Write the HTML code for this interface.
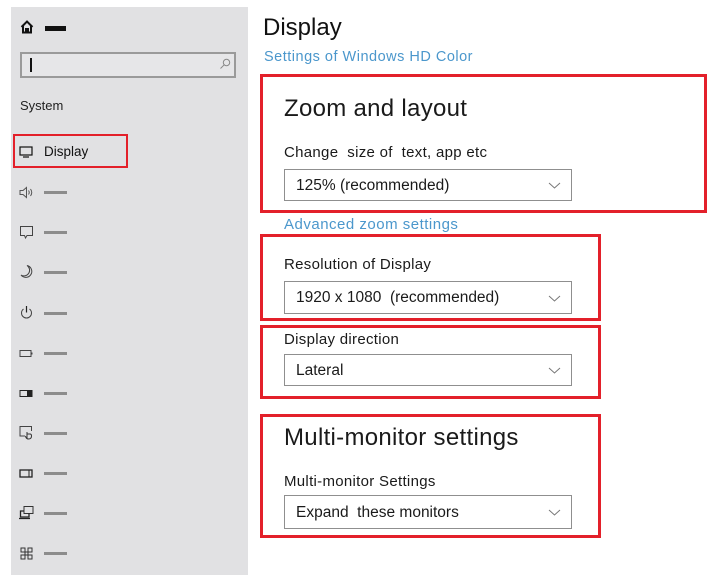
<!DOCTYPE html>
<html><head><meta charset="utf-8"><style>
*{margin:0;padding:0;box-sizing:border-box}
body{width:709px;height:579px;background:#fff;position:relative;overflow:hidden;font-family:"Liberation Sans","DejaVu Sans",sans-serif;color:#1a1a1a}
.a{position:absolute;white-space:nowrap}
#side{position:absolute;left:11px;top:7px;width:237px;height:568px;background:#e1e1e3}
.dash{position:absolute;left:44px;width:23px;height:3px;background:#8c8c8c}
.ic{position:absolute;left:19px;width:15px;height:15px}
.red{position:absolute;border:3px solid #e3202a}
.dd{position:absolute;left:284px;width:288px;border:1px solid #8f8f8f;background:#fff;font-size:15.5px;padding-left:11px}
.dd svg{position:absolute;right:10px;top:50%;margin-top:-3px}
.lbl{font-size:15px;left:284px;letter-spacing:0.3px}
.h{font-size:24px;left:284px;letter-spacing:0.3px}
.link{color:#4b97cc;letter-spacing:0.5px}
</style></head><body>
<div id="side"></div>
<svg class="a" style="left:20px;top:20px" width="14" height="14" viewBox="0 0 14 14"><path d="M1.5 7 L7 1.5 L12.5 7 M3 6 V12.5 H6 V9 H8 V12.5 H11 V6" fill="none" stroke="#111" stroke-width="2"/></svg>
<div class="a" style="left:45px;top:26px;width:21px;height:5px;background:#111"></div>
<div class="a" style="left:20px;top:52px;width:216px;height:26px;border:2px solid #9a9a9a;background:#e6e6e8"></div>
<div class="a" style="left:30px;top:58px;width:2px;height:14px;background:#111"></div>
<svg class="a" style="left:219px;top:58px" width="12" height="12" viewBox="0 0 12 12"><circle cx="7.5" cy="4.5" r="3.2" fill="none" stroke="#888" stroke-width="1"/><path d="M5.2 6.8 L1.5 10.5" stroke="#888" stroke-width="1"/></svg>
<div class="a" style="left:20px;top:98px;font-size:13px;color:#222">System</div>
<div class="red" style="left:13px;top:134px;width:115px;height:34px;border-width:2px"></div>
<svg class="a" style="left:19px;top:146px" width="14" height="12" viewBox="0 0 14 12"><rect x="1" y="1" width="12" height="8" fill="none" stroke="#111" stroke-width="1.2"/><path d="M4 11 H10" stroke="#111" stroke-width="1.2"/></svg>
<div class="a" style="left:44px;top:144px;font-size:13.5px;color:#111">Display</div>
<svg class="ic" style="top:185px" viewBox="0 0 15 15"><path d="M1 5.5 H4 L7.5 2.5 V12.5 L4 9.5 H1 Z M9.5 5.5 Q11 7.5 9.5 9.5 M11.5 4 Q14 7.5 11.5 11" fill="none" stroke="#555" stroke-width="1"/></svg>
<div class="dash" style="top:191px"></div>
<svg class="ic" style="top:225px" viewBox="0 0 15 15"><path d="M1.5 1.5 H13.5 V10.5 H8 L6.5 13 L5.5 10.5 H1.5 Z" fill="none" stroke="#444" stroke-width="1"/></svg>
<div class="dash" style="top:231px"></div>
<svg class="ic" style="top:264px" viewBox="0 0 15 15"><path d="M8 1.5 A6 6 0 1 1 2 11 A5 5 0 0 0 8 1.5 Z" fill="none" stroke="#444" stroke-width="1"/></svg>
<div class="dash" style="top:271px"></div>
<svg class="ic" style="top:305px" viewBox="0 0 15 15"><path d="M4.5 4 A5 5 0 1 0 10.5 4" fill="none" stroke="#444" stroke-width="1"/><path d="M7.5 1 V7.5" stroke="#222" stroke-width="1.2"/></svg>
<div class="dash" style="top:312px"></div>
<svg class="ic" style="top:346px" viewBox="0 0 15 15"><rect x="1" y="4.5" width="11" height="6" fill="none" stroke="#444" stroke-width="1"/><rect x="12" y="6.5" width="1.5" height="2" fill="#444"/></svg>
<div class="dash" style="top:352px"></div>
<svg class="ic" style="top:386px" viewBox="0 0 15 15"><rect x="1" y="4.5" width="12" height="6" fill="none" stroke="#222" stroke-width="1"/><rect x="8" y="5" width="5" height="5" fill="#222"/></svg>
<div class="dash" style="top:392px"></div>
<svg class="ic" style="top:425px" viewBox="0 0 15 15"><path d="M6 11 H1 V1.5 H12.5 V6" fill="none" stroke="#444" stroke-width="1"/><path d="M8 13.5 V7 M8 9 H11 Q12.5 9 12.5 11 Q12.5 14 9.5 14 Q7 14 6.5 11" fill="none" stroke="#333" stroke-width="1"/></svg>
<div class="dash" style="top:432px"></div>
<svg class="ic" style="top:466px" viewBox="0 0 15 15"><rect x="1" y="4" width="12" height="7" fill="none" stroke="#222" stroke-width="1.3"/><path d="M10 4 V11" stroke="#222" stroke-width="1"/></svg>
<div class="dash" style="top:472px"></div>
<svg class="ic" style="top:505px" viewBox="0 0 15 15"><rect x="5" y="1.5" width="9" height="7" fill="none" stroke="#333" stroke-width="1"/><path d="M5 6 H1.5 V12 H10 V8.5 M0 13.5 H11" fill="none" stroke="#222" stroke-width="1.3"/></svg>
<div class="dash" style="top:512px"></div>
<svg class="ic" style="top:546px" viewBox="0 0 15 15"><rect x="2" y="2" width="4" height="4" fill="none" stroke="#333" stroke-width="1"/><rect x="9" y="2" width="4" height="4" fill="none" stroke="#333" stroke-width="1"/><rect x="2" y="9" width="4" height="4" fill="none" stroke="#333" stroke-width="1"/><rect x="9" y="9" width="4" height="4" fill="none" stroke="#333" stroke-width="1"/><rect x="6" y="6" width="3" height="3" fill="none" stroke="#333" stroke-width="1"/></svg>
<div class="dash" style="top:552px"></div>

<div class="a" style="left:263px;top:14px;font-size:24px;color:#111">Display</div>
<div class="a link" style="left:264px;top:49px;font-size:14.5px">Settings of Windows HD Color</div>

<div class="red" style="left:260px;top:74px;width:447px;height:139px"></div>
<div class="a h" style="top:95px">Zoom and layout</div>
<div class="a lbl" style="top:144px">Change&nbsp; size of&nbsp; text, app etc</div>
<div class="dd" style="top:169px;height:32px;line-height:31px">125% (recommended)<svg width="13" height="7"><path d="M1 1 L6.5 6 L12 1" fill="none" stroke="#777" stroke-width="1"/></svg></div>
<div class="a link" style="left:284px;top:216px;font-size:15px">Advanced zoom settings</div>

<div class="red" style="left:260px;top:234px;width:341px;height:87px"></div>
<div class="a lbl" style="top:256px">Resolution of Display</div>
<div class="dd" style="top:281px;height:33px;line-height:32px">1920 x 1080&nbsp; (recommended)<svg width="13" height="7"><path d="M1 1 L6.5 6 L12 1" fill="none" stroke="#777" stroke-width="1"/></svg></div>

<div class="red" style="left:260px;top:325px;width:341px;height:74px"></div>
<div class="a lbl" style="top:331px">Display direction</div>
<div class="dd" style="top:354px;height:32px;line-height:31px">Lateral<svg width="13" height="7"><path d="M1 1 L6.5 6 L12 1" fill="none" stroke="#777" stroke-width="1"/></svg></div>

<div class="red" style="left:260px;top:414px;width:341px;height:124px"></div>
<div class="a h" style="top:424px">Multi-monitor settings</div>
<div class="a lbl" style="top:473px">Multi-monitor Settings</div>
<div class="dd" style="top:495px;height:34px;line-height:33px">Expand&nbsp; these monitors<svg width="13" height="7"><path d="M1 1 L6.5 6 L12 1" fill="none" stroke="#777" stroke-width="1"/></svg></div>
</body></html>
